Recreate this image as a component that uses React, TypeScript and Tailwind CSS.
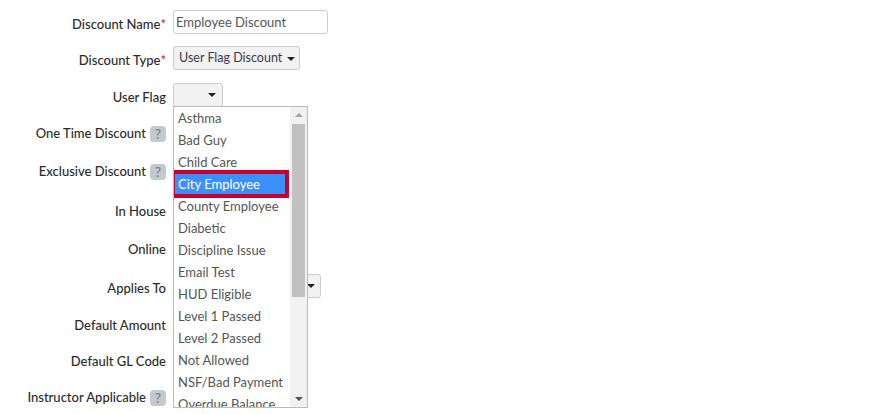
const flags = [
  'Asthma',
  'Bad Guy',
  'Child Care',
  'City Employee',
  'County Employee',
  'Diabetic',
  'Discipline Issue',
  'Email Test',
  'HUD Eligible',
  'Level 1 Passed',
  'Level 2 Passed',
  'Not Allowed',
  'NSF/Bad Payment',
  'Overdue Balance',
];

function Caret() {
  return <span className="w-0 h-0 border-x-[4px] border-x-transparent border-t-[4px] border-t-[#222]" />;
}

function Help() {
  return (
    <span className="w-[16px] h-[16px] ml-[4px] rounded-[4px] bg-[#c4c9cc] text-[#5f87ad] text-[14px] font-medium leading-[16px] text-center">
      ?
    </span>
  );
}

function Row({
  label,
  height,
  required,
  help,
  children,
}: {
  label: string;
  height: string;
  required?: boolean;
  help?: boolean;
  children?: React.ReactNode;
}) {
  return (
    <div className={`flex items-center ${height}`}>
      <div className="w-[166px] mt-[2px] flex items-center justify-end text-[13px] font-medium text-[#2b2b2b] whitespace-nowrap">
        {label}
        {required && <span className="text-[#b0272f]">*</span>}
        {help && <Help />}
      </div>
      <div className="ml-[7px] mb-[4px]">{children}</div>
    </div>
  );
}

export default function App() {
  return (
    <div
      className="relative w-[894px] h-[414px] overflow-hidden bg-white pt-[6px]"
      style={{ fontFamily: 'Lato, "Liberation Sans", sans-serif' }}
    >
      <Row label="Discount Name" height="h-[36px]" required>
        <div className="w-[155px] h-[24px] px-[2px] border border-[#ccc] rounded-[3px] text-[13px] leading-[22px] text-[#555] whitespace-nowrap">
          Employee Discount
        </div>
      </Row>
      <Row label="Discount Type" height="h-[36px]" required>
        <div className="flex items-center justify-between w-[127px] h-[24px] pl-[5px] pr-[4px] pt-[1px] border border-[#ccc] rounded-[3px] bg-[#f2f2f2] text-[12.5px] text-[#3a3a4a] whitespace-nowrap">
          User Flag Discount
          <Caret />
        </div>
      </Row>
      <Row label="User Flag" height="h-[38px]">
        <div className="flex items-center justify-end w-[50px] h-[24px] pr-[6px] border border-[#ccc] rounded-[3px] bg-[#f2f2f2]">
          <Caret />
        </div>
      </Row>
      <Row label="One Time Discount" height="h-[34px]" help />
      <Row label="Exclusive Discount" height="h-[42px]" help />
      <Row label="In House" height="h-[38px]" />
      <Row label="Online" height="h-[38px]" />
      <Row label="Applies To" height="h-[40px]">
        <div className="flex items-center justify-end w-[148px] h-[24px] pr-[5px] border border-[#ccc] rounded-[3px] bg-[#f2f2f2]">
          <Caret />
        </div>
      </Row>
      <Row label="Default Amount" height="h-[34px]" />
      <Row label="Default GL Code" height="h-[38px]" />
      <Row label="Instructor Applicable" height="h-[34px]" help />

      {/* open list over the form */}
      <div className="absolute left-[173px] top-[106px] w-[135px] h-[302px] flex border border-[#bbb] bg-white overflow-hidden">
        <ul className="w-[116px] text-[13px] text-[#555] whitespace-nowrap">
          {flags.map((flag) =>
            flag === 'City Employee' ? (
              <li key={flag} className="relative w-[114px] h-[22px] pl-[4px] leading-[22px] bg-[#3b8fff] text-white">
                {flag}
                <span className="absolute -left-[3px] -right-[1px] -top-[3px] -bottom-[3px] border-[4px] border-[#c8002d]" />
              </li>
            ) : (
              <li key={flag} className="h-[22px] pl-[4px] leading-[22px]">
                {flag}
              </li>
            ),
          )}
        </ul>
        <div className="flex flex-col items-center w-[17px] bg-[#f1f1f1]">
          <span className="mt-[6px] w-0 h-0 border-x-[4px] border-x-transparent border-b-[4px] border-b-[#a3a3a3]" />
          <span className="mt-[7px] w-[13px] h-[173px] bg-[#c1c1c1]" />
          <span className="mt-auto mb-[6px] w-0 h-0 border-x-[4px] border-x-transparent border-t-[4px] border-t-[#505050]" />
        </div>
      </div>
    </div>
  );
}
